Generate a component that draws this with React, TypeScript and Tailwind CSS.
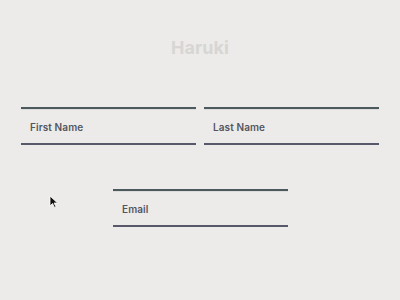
import React from "react";

function Field({ label, className = "" }: { label: string; className?: string }) {
  return (
    <div className={"flex flex-col w-[175px] " + className}>
      <div className="h-[2px] bg-[#4c5a5e]" />
      <div className="h-[1px] bg-[#dcdcdc]" />
      <div className="h-[33px] flex items-center pl-[9px] pt-[2px]">
        <span className="text-[10px] font-semibold text-[#55565f] tracking-[0.1px]">{label}</span>
      </div>
      <div className="h-[2px] bg-[#575869]" />
    </div>
  );
}

export default function App() {
  return (
    <div
      className="relative w-[400px] h-[300px] bg-[#ecebe9] overflow-hidden"
      style={{ fontFamily: "Inter, 'Liberation Sans', sans-serif" }}
    >
      <div className="pt-[37px] flex justify-center">
        <h1 className="text-[18px] leading-[22px] font-bold text-[#d7d6d4]">Haruki</h1>
      </div>
      <div className="mt-[48px] flex gap-[8px] pl-[21px]">
        <Field label="First Name" />
        <Field label="Last Name" className="w-[174px]" />
      </div>
      <div className="mt-[44px] flex justify-center pl-[1px]">
        <Field label="Email" className="[&_span]:pl-0" />
      </div>
      <svg
        className="absolute left-[49px] top-[195px]"
        width="10"
        height="14"
        viewBox="0 0 10 14"
      >
        <path d="M1 1 L1 11 L3.5 8.5 L5.5 12.5 L7 11.8 L5 8 L8.5 8 Z" fill="#111" stroke="#fff" strokeWidth="0.8" />
      </svg>
    </div>
  );
}
